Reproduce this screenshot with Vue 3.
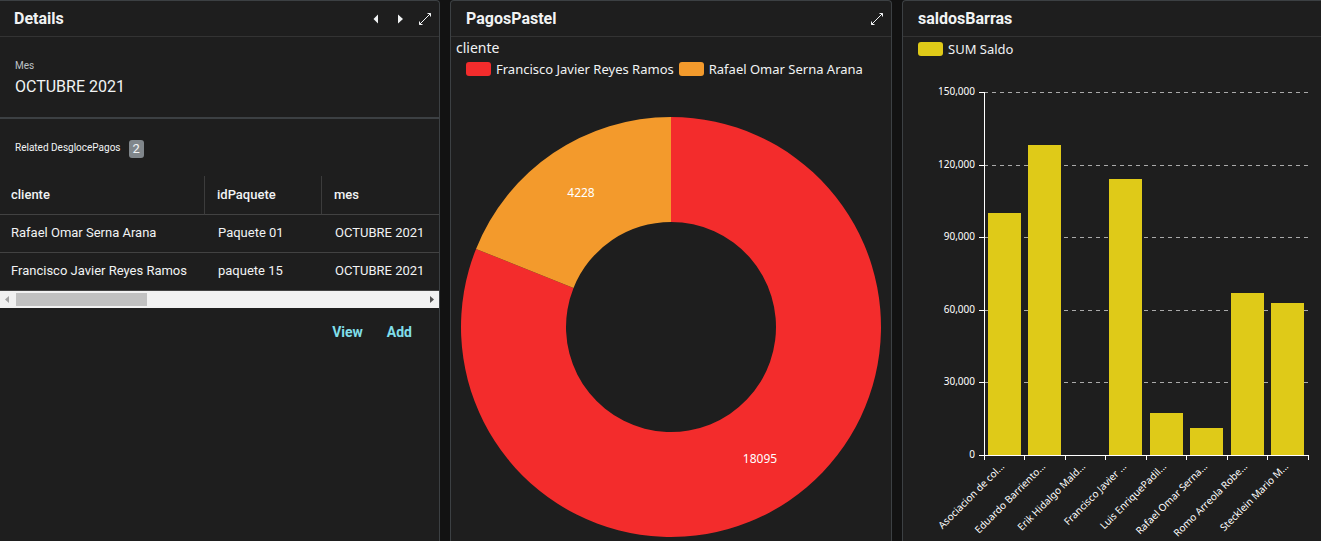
<script setup>
import { ref } from 'vue'

const columns = ['cliente', 'idPaquete', 'mes']
const rows = [
  ['Rafael Omar Serna Arana', 'Paquete 01', 'OCTUBRE 2021'],
  ['Francisco Javier Reyes Ramos', 'paquete 15', 'OCTUBRE 2021'],
]
const scroll = ref(0)

const payments = [
  { name: 'Francisco Javier Reyes Ramos', value: 18095, color: '#f32c2c', lx: 309, ly: 366 },
  { name: 'Rafael Omar Serna Arana', value: 4228, color: '#f39a2c', lx: 130, ly: 100 },
]
const total = payments.reduce((sum, p) => sum + p.value, 0)
const centre = { x: 220, y: 230 }
const point = (radius, share) => {
  const angle = share * 2 * Math.PI
  return `${(centre.x + radius * Math.sin(angle)).toFixed(2)} ${(centre.y - radius * Math.cos(angle)).toFixed(2)}`
}
let start = 0
const slices = payments.map((p) => {
  const end = start + p.value / total
  const large = end - start > 0.5 ? 1 : 0
  const d = `M${point(210, start)}A210 210 0 ${large} 1 ${point(210, end)}L${point(105, end)}A105 105 0 ${large} 0 ${point(105, start)}Z`
  start = end
  return { ...p, d }
})

const plot = { left: 81, right: 405, top: 32, bottom: 395, max: 150000 }
const yOf = (v) => Math.round(plot.bottom - (v / plot.max) * (plot.bottom - plot.top))
const ticks = [150000, 120000, 90000, 60000, 30000, 0].map((v) => ({
  label: v.toLocaleString('en-US'),
  value: v,
  y: yOf(v),
}))
const balances = [
  ['Asociacion de col...', 100000],
  ['Eduardo Barriento...', 128000],
  ['Erik Hidalgo Mald...', 0],
  ['Francisco Javier ...', 114000],
  ['Luis EnriquePadil...', 17500],
  ['Rafael Omar Serna...', 11200],
  ['Romo Arreola Robe...', 66800],
  ['Stecklein Mario M...', 63000],
]
const step = (plot.right - plot.left) / balances.length
const bars = balances.map(([name, value], i) => ({
  name,
  x: Math.floor(plot.left + i * step) + 4,
  y: yOf(value),
  height: plot.bottom - yOf(value),
  cx: Math.round(plot.left + (i + 0.5) * step),
}))
const edges = Array.from({ length: balances.length + 1 }, (_, i) => Math.floor(plot.left + i * step))
</script>

<template>
  <main class="board">
    <section class="card">
      <header class="head">
        <h2>Details</h2>
        <div class="tools">
          <button type="button" aria-label="Previous">
            <svg width="14" height="14" viewBox="0 0 14 14"><path d="M8 2.500v9L3.500 7z" fill="#f1f3f4" /></svg>
          </button>
          <button type="button" aria-label="Next">
            <svg width="14" height="14" viewBox="0 0 14 14"><path d="M4 2.500v9L9 7z" fill="#f1f3f4" /></svg>
          </button>
          <button type="button" aria-label="Expand">
            <svg width="14" height="14" viewBox="0 0 14 14"><path d="M1.500 12.500l11-11M9.500 1.500h3v3M1.500 9.500v3h3" fill="none" stroke="#f1f3f4" /></svg>
          </button>
        </div>
      </header>
      <dl class="field">
        <dt>Mes</dt>
        <dd>OCTUBRE 2021</dd>
      </dl>
      <div class="related">
        <h3>Related DesglocePagos</h3>
        <span class="count">2</span>
      </div>
      <table>
        <thead>
          <tr><th v-for="c in columns" :key="c" scope="col">{{ c }}</th></tr>
        </thead>
        <tbody>
          <tr v-for="r in rows" :key="r[0]"><td v-for="c in r" :key="c">{{ c }}</td></tr>
        </tbody>
      </table>
      <div class="scroller">
        <button type="button" aria-label="Scroll left">
          <svg width="16" height="17" viewBox="0 0 16 17"><path d="M9 5v7L5 8.500z" fill="#a3a3a3" /></svg>
        </button>
        <input v-model="scroll" type="range" min="0" max="100" aria-label="Scroll table" />
        <button type="button" aria-label="Scroll right">
          <svg width="16" height="17" viewBox="0 0 16 17"><path d="M7 5v7l4-3.500z" fill="#505050" /></svg>
        </button>
      </div>
      <div class="actions">
        <button type="button">View</button>
        <button type="button">Add</button>
      </div>
    </section>

    <section class="card">
      <header class="head">
        <h2>PagosPastel</h2>
        <div class="tools">
          <button type="button" aria-label="Expand">
            <svg width="14" height="14" viewBox="0 0 14 14"><path d="M1.500 12.500l11-11M9.500 1.500h3v3M1.500 9.500v3h3" fill="none" stroke="#f1f3f4" /></svg>
          </button>
        </div>
      </header>
      <h3 class="caption">cliente</h3>
      <ul class="legend pie-legend">
        <li v-for="(p, i) in payments" :key="p.name"><i :class="['swatch', i ? 'orange' : 'red']"></i>{{ p.name }}</li>
      </ul>
      <svg class="chart" viewBox="0 0 440 444" role="img" aria-label="PagosPastel">
        <path v-for="s in slices" :key="s.name" :d="s.d" :fill="s.color" />
        <text v-for="s in slices" :key="s.value" class="slice-label" :x="s.lx" :y="s.ly">{{ s.value }}</text>
      </svg>
    </section>

    <section class="card last">
      <header class="head">
        <h2>saldosBarras</h2>
      </header>
      <ul class="legend bar-legend">
        <li><i class="swatch yellow"></i>SUM Saldo</li>
      </ul>
      <svg class="chart" viewBox="0 0 418 481" role="img" aria-label="saldosBarras">
        <g shape-rendering="crispEdges">
          <template v-for="t in ticks" :key="t.label">
            <path v-if="t.value" class="grid" :d="`M${plot.left} ${t.y + 0.5}H${plot.right}`" />
            <path class="axis" :d="`M${plot.left - 5} ${t.y + 0.5}h5`" />
          </template>
          <template v-for="b in bars" :key="b.name">
            <rect v-if="b.height" class="bar" :x="b.x" :y="b.y" width="33" :height="b.height" />
          </template>
          <path class="axis" :d="`M${plot.left + 0.5} ${plot.top}V${plot.bottom}`" />
          <path class="axis" :d="`M${plot.left} ${plot.bottom + 0.5}H${plot.right + 1}`" />
          <path v-for="e in edges" :key="e" class="axis" :d="`M${e + 0.5} ${plot.bottom}v5`" />
        </g>
        <text v-for="t in ticks" :key="t.value" class="tick" :x="plot.left - 9" :y="t.y + 3">{{ t.label }}</text>
        <text
          v-for="b in bars"
          :key="b.cx"
          class="category"
          :transform="`translate(${b.cx + 1} ${plot.bottom + 12}) rotate(-45)`"
        >{{ b.name }}</text>
      </svg>
    </section>
  </main>
</template>

<style>
body {
  margin: 0;
  background: #121212;
}
</style>

<style scoped>
.board {
  display: grid;
  grid-template-columns: 440fr 442fr 419fr;
  gap: 10px;
  min-height: 100vh;
  overflow: hidden;
  color: #f1f3f4;
  font-family: Roboto, sans-serif;
}
.card {
  min-width: 0;
  box-sizing: border-box;
  background: #1e1e1e;
  border: 1px solid #3c4043;
  border-bottom: 0;
  border-radius: 4px 4px 0 0;
}
.card:first-child {
  border-left: 0;
  border-top-left-radius: 0;
}
.card.last {
  border-right: 0;
  border-top-right-radius: 0;
}
.head {
  display: flex;
  align-items: center;
  justify-content: space-between;
  box-sizing: border-box;
  height: 36px;
  padding: 0 7px 0 15px;
  border-bottom: 1px solid #333;
}
.card:first-child .head {
  padding-left: 14px;
}
h2, h3, dl, dd, ul {
  margin: 0;
  padding: 0;
}
h2 {
  font-size: 16px;
  font-weight: 700;
  line-height: 20px;
}
button {
  padding: 0;
  border: 0;
  background: none;
  font-family: inherit;
  cursor: pointer;
}
svg {
  display: block;
}
.tools {
  display: flex;
  gap: 10px;
}
.field {
  box-sizing: border-box;
  height: 82px;
  padding: 22px 15px 0;
  border-bottom: 2px solid #3c4043;
}
dt {
  font-size: 10px;
  line-height: 14px;
  color: #bdc1c6;
}
dd {
  padding-top: 4px;
  font-size: 16px;
  line-height: 20px;
}
.related {
  display: flex;
  align-items: center;
  gap: 8px;
  height: 57px;
  padding: 0 15px;
}
.related h3 {
  font-size: 10px;
  font-weight: 400;
  line-height: 14px;
}
.count {
  width: 15px;
  margin-top: 3px;
  border-radius: 3px;
  background: #80868b;
  font-size: 13px;
  line-height: 18px;
  text-align: center;
}
table {
  width: 100%;
  table-layout: fixed;
  border-collapse: separate;
  border-spacing: 0;
  font-size: 13px;
}
th, td {
  box-sizing: border-box;
  height: 38px;
  padding: 0 0 2px 13px;
  border-bottom: 1px solid #424242;
  font-weight: 400;
  text-align: left;
  white-space: nowrap;
}
th {
  height: 39px;
  padding-left: 12px;
  border-right: 1px solid #3c3c3c;
  font-weight: 500;
}
th:first-child, td:first-child {
  padding-left: 11px;
}
th:first-child {
  width: 205px;
}
th:nth-child(2) {
  width: 117px;
}
th:last-child {
  border-right: 0;
}
.scroller {
  display: flex;
  height: 17px;
  background: #f1f1f1;
}
.scroller input {
  flex: 1;
  min-width: 0;
  height: 17px;
  margin: 0;
  appearance: none;
  background: none;
}
.scroller input::-webkit-slider-thumb {
  appearance: none;
  width: 131px;
  height: 13px;
  background: #c1c1c1;
}
.actions {
  display: flex;
  justify-content: flex-end;
  gap: 24px;
  padding: 14px 27px;
}
.actions button {
  color: #80deea;
  font-size: 14px;
  font-weight: 700;
  line-height: 20px;
}
.caption {
  padding: 1px 5px 0;
  font: 400 14px/20px "Noto Sans", sans-serif;
}
.legend {
  display: flex;
  gap: 5px;
  list-style: none;
  white-space: nowrap;
  font: 400 13px/16px "Noto Sans", sans-serif;
}
.legend li {
  display: flex;
  align-items: center;
  gap: 5px;
}
.pie-legend {
  height: 16px;
  padding: 3px 15px 20px;
}
.bar-legend {
  height: 16px;
  padding: 4px 15px 3px;
}
.swatch {
  width: 25px;
  height: 14px;
  border-radius: 3px;
}
.red {
  background: #f32c2c;
}
.orange {
  background: #f39a2c;
}
.yellow {
  background: #dfca18;
}
.chart {
  width: 100%;
  height: auto;
  fill: #fff;
  font-family: "Noto Sans", sans-serif;
}
.slice-label {
  font-size: 12px;
  text-anchor: middle;
}
.axis {
  fill: none;
  stroke: #fff;
}
.grid {
  fill: none;
  stroke: #aaa;
  stroke-dasharray: 4 4;
}
.bar {
  fill: #dfca18;
}
.tick {
  font-size: 10px;
  text-anchor: end;
}
.category {
  font-size: 10px;
  text-anchor: end;
}
</style>
